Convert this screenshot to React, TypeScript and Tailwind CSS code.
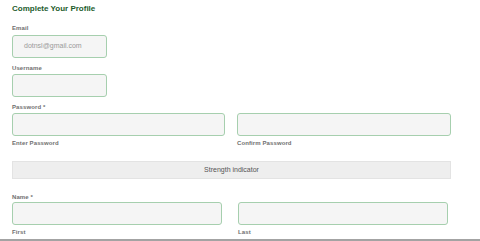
import React from 'react';

const inputCls = "block h-[23px] border border-[#a6cfae] rounded-[3px] bg-[#f5f5f5] outline-none";

const Label: React.FC<{ text: string; className?: string }> = ({ text, className = '' }) => (
  <div className={`text-[6px] leading-[8px] font-bold text-[#707070] tracking-[0.1px] ${className}`}>{text}</div>
);

export default function App() {
  return (
    <div className="w-[480px] h-[241px] overflow-hidden bg-white flex flex-col" style={{ fontFamily: '"Liberation Sans", Arial, sans-serif' }}>
      <div className="h-[239px] pl-[12px]">
        <h2 className="mt-[4px] text-[8px] leading-[10px] font-bold text-[#1d5c2c]">Complete Your Profile</h2>

        <Label text="Email" className="mt-[10px]" />
        <div className={`${inputCls} mt-[3px] w-[95px] h-[22px] flex items-center pl-[11px] text-[7px] text-[#9a9a9a]`}>
          dotnsl@gmail.com
        </div>

        <Label text="Username" className="mt-[6px]" />
        <input className={`${inputCls} mt-[2px] w-[95px] h-[22px]`} />

        <Label text="Password *" className="mt-[6px]" />
        <div className="mt-[2px] flex gap-[12px]">
          <div className="w-[213px]">
            <input className={`${inputCls} w-full`} />
            <Label text="Enter Password" className="mt-[3px]" />
          </div>
          <div className="w-[214px]">
            <input className={`${inputCls} w-full`} />
            <Label text="Confirm Password" className="mt-[3px]" />
          </div>
        </div>

        <div className="mt-[14px] w-[439px] h-[18px] bg-[#eeeeee] border border-[#e3e3e3] flex items-center justify-center text-[7px] text-[#555]">
          Strength indicator
        </div>

        <Label text="Name *" className="mt-[14px]" />
        <div className="mt-[1px] flex gap-[16px]">
          <div className="w-[210px]">
            <input className={`${inputCls} w-full`} />
            <Label text="First" className="mt-[3px]" />
          </div>
          <div className="w-[210px]">
            <input className={`${inputCls} w-full`} />
            <Label text="Last" className="mt-[3px]" />
          </div>
        </div>
      </div>
      <div className="h-[2px] bg-[#a3a3a3]" />
    </div>
  );
}
